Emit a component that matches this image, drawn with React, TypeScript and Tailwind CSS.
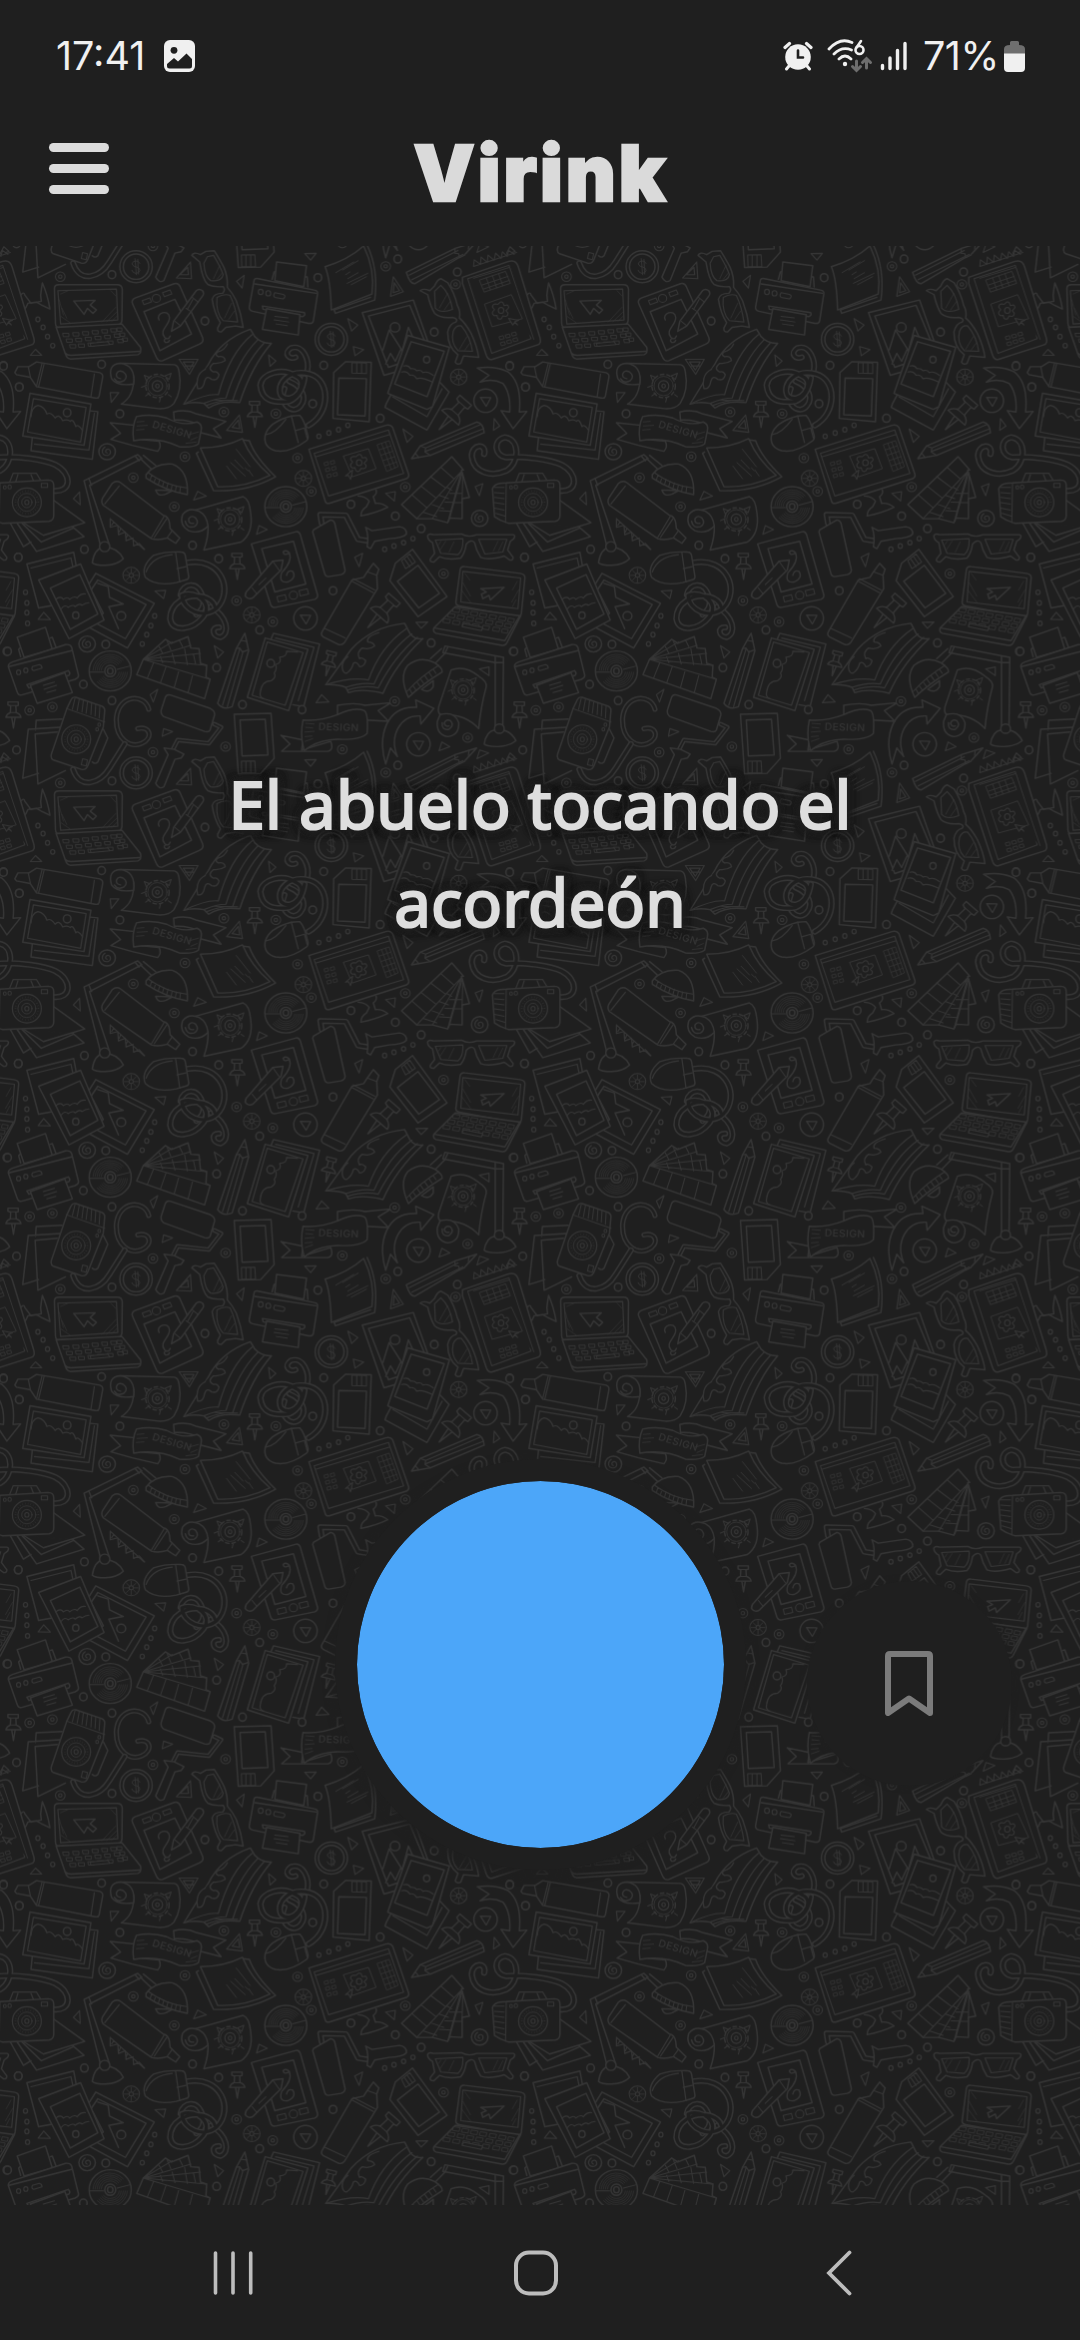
import React from "react";

const BG = "#1f1f1f";
const INK = "#353535";

/* Size of one doodle tile, in drawing units (2.9037 x 3 units per pixel). */
const TILE_W = 1470;
const TILE_H = 1518.75;

function P({ d, w = 4.2 }: { d: string; w?: number }) {
  return <path d={d} strokeWidth={w} />;
}

/* Hollow line: a wide stroke with a narrower background stroke over it. */
function Tube({ d, w = 19 }: { d: string; w?: number }) {
  return (
    <g fill="none">
      <path d={d} strokeWidth={w} />
      <path d={d} strokeWidth={w - 8.5} stroke={BG} />
    </g>
  );
}

function Coin({ x, y }: { x: number; y: number }) {
  return (
    <g>
      <ellipse cx={x} cy={y} rx="47" ry="48" />
      <ellipse cx={x} cy={y} rx="37" ry="38" />
      <path d={`M${x + 11} ${y - 10}q-4-9-13-7q-12 3-8 12q3 5 11 6q10 2 10 10q-1 9-12 9q-9-1-11-9M${x - 3} ${y - 24}l4 48M${x + 5} ${y - 22}l2 44`} strokeWidth="2.6" fill="none" />
    </g>
  );
}

function Play({ x, y }: { x: number; y: number }) {
  return (
    <g>
      <ellipse cx={x} cy={y} rx="34" ry="35" />
      <path d={`M${x - 15} ${y - 10}l30 1l-13 26z`} strokeWidth="3.6" />
    </g>
  );
}

function Disc({ x, y }: { x: number; y: number }) {
  return (
    <g>
      <ellipse cx={x} cy={y} rx="61" ry="60" />
      {[50, 44, 38, 32, 26].map((r) => (
        <path key={r} d={`M${x - r} ${y - 2}A${r} ${r} 0 0 1 ${x + r * 0.75} ${y - r * 0.66}M${x + r} ${y + 4}A${r} ${r} 0 0 1 ${x - r * 0.75} ${y + r * 0.66}`} strokeWidth="1.8" />
      ))}
      <path d={`M${x - 60} ${y + 3}h40M${x + 20} ${y - 5}l38-10`} strokeWidth="3" />
      <ellipse cx={x} cy={y} rx="16" ry="17" />
      <ellipse cx={x} cy={y} rx="8" ry="9" />
    </g>
  );
}

function Lens({ x, y }: { x: number; y: number }) {
  return (
    <g>
      <ellipse cx={x} cy={y} rx="42" ry="43" strokeWidth="3.4" />
      <ellipse cx={x} cy={y} rx="33" ry="34" strokeWidth="5" strokeDasharray="1 7" strokeLinecap="butt" />
      <ellipse cx={x} cy={y} rx="26" ry="27" strokeWidth="2.4" />
      <ellipse cx={x} cy={y} rx="15" ry="16" strokeWidth="2.6" />
      <ellipse cx={x} cy={y} rx="6" ry="7" strokeWidth="3" />
    </g>
  );
}

function Gear({ x, y, s = 1 }: { x: number; y: number; s?: number }) {
  return (
    <g transform={`translate(${x} ${y}) scale(${s})`}>
      <ellipse rx="34" ry="35" strokeWidth="4" strokeDasharray="10 9" />
      <ellipse rx="28" ry="29" strokeWidth="2.4" />
      <ellipse rx="15" ry="16" strokeWidth="3.4" />
      <ellipse rx="5" ry="6" strokeWidth="3.4" />
      <path d="M-38-32l14 6l-8 10zM40-38l-6 18l-13-10zM-46 4l14-6M6 48l3-12M32 26l8 6M-34 30l10-8" strokeWidth="3" />
    </g>
  );
}

function Flower({ x, y }: { x: number; y: number }) {
  return (
    <g strokeWidth="3">
      <path d={`M${x - 5} ${y - 22}q6-6 11 0l3 8l9-2q7 6 2 11l-6 6l6 7q1 9-7 10l-8-1l-4 8q-7 4-11-2l-2-8l-8 1q-8-5-4-12l5-6l-6-7q0-9 8-10l8 1z`} />
      <ellipse cx={x} cy={y} rx="8" ry="9" />
    </g>
  );
}

function Pin({ x, y, r = 0, s = 1 }: { x: number; y: number; r?: number; s?: number }) {
  return (
    <g transform={`translate(${x} ${y}) rotate(${r}) scale(${s})`}>
      <P w={4 / s} d="M-3 10L2 42L7 10" />
      <P w={4 / s} d="M-14-36h30v10l-7 2l1 20q12 4 14 14h-44q2-10 13-14l1-20l-8-3z" />
      <P w={3 / s} d="M-8-25h18M-9-4h20" />
    </g>
  );
}

function Wheel({ x, y }: { x: number; y: number }) {
  return (
    <g>
      <ellipse cx={x} cy={y} rx="24" ry="24" strokeWidth="3" />
      <path d={`M${x - 20} ${y}h40M${x} ${y - 20}v40M${x - 14} ${y - 14}l28 28M${x + 14} ${y - 14}l-28 28`} strokeWidth="2.4" />
      <ellipse cx={x} cy={y} rx="6" ry="6" strokeWidth="3" />
    </g>
  );
}

function Swirl({ x, y }: { x: number; y: number }) {
  return (
    <g>
      <ellipse cx={x} cy={y} rx="24" ry="24" />
      <path d={`M${x} ${y + 4}q-7-3-3-9q7-6 12 2q3 11-7 14q-14 2-16-11q0-9 8-14`} fill="none" strokeWidth="3.5" />
    </g>
  );
}

const RINGS: [number, number][] = [
  [325, 104], [595, 243], [923, 113], [1155, 57], [1328, 96], [1261, 276], [940, 376], [1480, 378], [295, 373], [56, 441],
  [348, 521], [908, 491], [1104, 535], [10, 377], [1019, 793], [1148, 828], [1223, 866], [559, 916], [245, 928], [53, 952],
  [635, 956], [967, 1052], [1523, 952], [754, 1170], [307, 1213], [20, 1234], [242, 1333], [629, 1283], [704, 1394], [325, 1382],
  [877, 1409], [1252, 1209], [48, 1530], [1492, 1234], [1526, 441],
];
const DOTTED: [number, number][] = [
  [175, 110], [1120, 79], [1323, 133], [444, 18], [537, 650], [387, 713], [506, 800], [864, 654], [904, 754], [801, 521], [650, 516],
  [1177, 741], [1288, 1001], [687, 1082], [792, 1145], [152, 1401], [86, 1411], [655, 1520], [994, 1528], [1146, 1384], [1358, 1493],
];
const BEADS: [number, number][] = [
  [110, 238], [125, 262], [138, 290], [153, 317], [926, 589], [955, 579], [983, 569], [1010, 556], [1117, 928], [1144, 918],
  [1172, 908], [1199, 896], [74, 1057], [78, 1089], [78, 1118], [80, 1150], [449, 1128], [438, 1157], [426, 1184], [413, 1212],
];
const TRIANGLES =
  "M885 41l33-1l-16 20zM687 124l22-18l-6 38zM1010 236l29 19l-18 18zM1026 320l30 9l-25 18zM780 345l21 18l-17 16zM88 346l15-18l18 18zM320 458l25 0l-22 29zM1170 567l29 22l-17 18zM1435 536l16 22l-18 13zM562 780l12-26l25 14zM1120 760l28-5l-3 28zM1380 740l22-9l-10 36zM213 776l18-20l2 38zM752 857l24 12l-31 14zM1030 952l23-12l-10 40zM450 1053l31-2l-6 25zM111 1138l16-21l19 22zM1208 1147l34-1l-19 19zM622 1217l27 19l-17 18zM1392 1287l28-6l0 26zM934 1364l21 22l-37 2zM436 1364l22-16l-13 38zM475 1466l26 9l-30 14zM1283 1506l23 14l-31 12zM0 1561l26-8l-15-14z" +
  "M512 114l41-48l3 50zM523 104l22-22l2 22zM1142 110l29 45l-37 14zM1145 128l15 24l-18 6zM520 358l55 0l-25 45zM532 366l31 0l-14 24zM538 378l24 0M695 525l9 52l-46-6zM692 540l4 26l-22-4z";

function Doodles() {
  return (
    <g fill={BG} stroke={INK} strokeLinecap="round" strokeLinejoin="round" strokeWidth="4.2">
      {/* Phone on its stand */}
      <P d="M1530 165q10-12 12 0l18 25l30-6l-2-18q2-20 5-37q15 35 22 78l-26-13l-14-8l-24 4q-12 30-22 18" />
      <P d="M1343 112L1478 64Q1498 58 1505 80L1567 290Q1574 312 1560 315L1430 358Q1418 362 1412 345L1343 130Z" />
      <P d="M1358 116L1478 76L1542 296L1428 340Z" w={3} />
      <P d="M1375 115L1480 82L1550 298" w={2.6} />
      <P d="M1393 120l75-26l14 36l-75 26zM1400 135l75-26M1404 147l75-26M1412 113l12 36M1430 107l12 36M1448 101l12 36" w={2.5} />
      <P d="M1408 192l77-28l32 72l-87 24z" w={2.6} />
      <Flower x={1455} y={211} />
      <P d="M1477 235l29 6l-11 4l8 10l-9-8l-5 8z" w={3} />
      <P d="M1450 290l11-3l3 9l-11 3zM1468 285l11-3l3 9l-11 3zM1486 279l11-3l3 9l-11 3zM1454 308l11-3l3 9l-11 3zM1472 302l11-3l3 9l-11 3zM1490 296l11-3l3 9l-11 3z" w={2.5} />

      {/* Laptop, upper left */}
      <P d="M158 145Q158 134 172 134L340 134Q354 134 355 148L354 240Q354 252 342 256L170 262Q162 262 161 250Z" />
      <P d="M168 152L338 147L342 240L176 252Z" w={3.4} />
      <P d="M176 162l22-10M172 180l12 45M178 230l25 18M310 245l28-28M325 243l14-14M322 152l14 16M180 205l14 30M296 246l40-44" w={1.8} />
      <P d="M214 183L276 181L262 195L280 210L270 220L254 205L244 223Z" />
      <P d="M163 262L354 252L408 322Q412 340 400 344L204 357Q194 356 190 342Z" />
      <P d="M190 340Q195 346 206 346L406 334" />
      {[0, 1, 2].map((r) => (
        <path key={r} d={`M${183 + r * 10} ${280 + r * 17}h17v10h-15zM${212 + r * 8} ${278 + r * 17}h17v10h-15zM${240 + r * 8} ${275 + r * 17}h17v10h-15zM${268 + r * 8} ${272 + r * 17}h17v10h-15zM${296 + r * 8} ${269 + r * 17}h16v10h-14zM${322 + r * 10} ${266 + r * 16}h16v10h-14zM${340 + r * 8} ${264 + r * 15}h14v10h-12z`} strokeWidth="2.6" />
      ))}
      <P d="M262 310l52-5l4 9l-54 5z" w={3} />

      {/* Tablet with stylus, top */}
      <P d="M385 192Q380 180 392 174L506 131Q518 128 523 140L588 292Q593 306 580 312L472 362Q460 366 454 352Z" />
      <P d="M418 215L508 178L556 282L464 332Z" />
      <P d="M413 182l22-8l5 12l-22 8zM472 158l22-8l5 12l-22 8z" w={3} />
      <ellipse cx="454" cy="175" rx="12" ry="12" strokeWidth="3" />
      <P d="M462 240C450 220 490 205 492 232C494 255 460 270 478 292Q488 302 494 288M484 295q-12 4-4 12q10 2 12-6" w={4} />
      <P d="M570 152Q578 144 588 152Q594 160 588 168L524 258L498 274L504 244Z" />
      <P d="M558 172l18 15M508 244l16 13M540 205l12 8M560 178l-16 30" w={3} />

      {/* Glasses standing, top */}
      <P d="M557 46Q562 34 582 44L598 34L622 32Q640 62 650 82Q662 110 660 142Q676 160 686 182Q700 220 706 262L684 258L656 262L642 276Q630 276 632 264L640 248Q622 220 616 178Q620 160 646 160Q656 150 648 140Q620 142 604 134Q588 120 580 66Z" />
      <P d="M602 50L620 46Q640 80 648 104Q644 126 612 122Q594 110 592 70ZM630 172Q650 160 668 166Q684 200 690 246L648 242Q626 220 630 172Z" w={3.4} />
      <P d="M600 110l10 10M638 76l-18 40M644 100l-14 18M672 190l-20 44M680 214l-16 24" w={2} />

      <Coin x={395} y={80} />
      <Coin x={962} y={298} />

      {/* Printer, top */}
      <P d="M790 118l6-22l8-1M880 140l4-30l8 1l2 30" />
      <P d="M803 66L890 77L882 140L798 122Z" />
      <P d="M738 120Q740 114 750 116L912 150Q924 152 922 162L910 242Q908 252 896 250L734 214Q722 210 724 200Z" />
      <P d="M740 132L918 160" />
      <g strokeWidth="3.2">
        <ellipse cx="757" cy="156" rx="7" ry="8" />
        <ellipse cx="779" cy="160" rx="7" ry="8" />
        <path d="M798 158l24 5q8 3 4 10l-4 4l-24-5q-6-4 0-14z" />
      </g>
      <P d="M762 198L884 218Q888 226 878 230L764 208Z" />
      <P d="M774 206L871 224L866 285L762 268Z" />
      <P d="M798 229l38 5M796 240l42 6M802 252l32 5" w={3} />

      {/* Sheets of paper, top */}
      <P d="M1066 15Q1100 90 1088 180L974 220L970 210L1076 172" />
      <P d="M944 80Q1010 60 1056 18Q1090 90 1080 162L962 210Q960 120 944 80Z" />
      <P d="M975 98l52-32M995 90l45-28M1004 104l12-8M1010 116l30-18M1008 130l60-30M1020 134l44-24" w={2.6} />

      {/* Pencil and bunting, top right */}
      <g>
        <P d="M1180 1616L1322 1544L1384 1524L1352 1560L1204 1650Q1190 1650 1180 1616Z" />
        <P d="M1188 1624L1330 1550M1196 1638L1344 1562M1322 1544l-2 14l12 2l2 12l16-8M1362 1532l-2 14" w={3.4} />
        <P d="M1375 1598L1500 1556M1375 1598l2-20l18 14l2-22l18 16l2-22l18 16l4-22l16 16l4-20l14 14l4-18l16 12" w={3} />
        <P d="M1385 1556l8-26l26 9z" w={3} />
      </g>

      {/* Glasses standing, right */}
      <P d="M1220 152Q1228 144 1248 152L1262 138Q1270 118 1280 116L1300 128Q1320 160 1328 196Q1338 214 1334 234Q1352 250 1368 280Q1386 320 1390 352L1346 348L1338 370Q1326 376 1322 366L1330 344Q1300 322 1300 276Q1306 250 1324 246Q1332 236 1314 232Q1280 236 1262 220Q1250 200 1242 164Z" />
      <P d="M1262 154L1280 136Q1306 160 1314 208Q1280 222 1264 204ZM1316 274Q1324 254 1340 258Q1366 290 1372 334L1330 332Q1308 310 1316 274Z" w={3.4} />
      <P d="M1300 160l-24 44M1308 184l-18 26M1356 290l-22 38M1364 310l-14 20" w={2} />

      {/* Framed print and polaroids */}
      <P d="M1052 218L1200 180L1262 362L1115 406Z" />
      <P d="M1070 228L1190 196L1248 340L1128 382Z" />
      <ellipse cx="1147" cy="262" rx="14" ry="14" />
      <P d="M1112 330l18-60l38 62l18-70l30 70M1120 372l14-32l14 24l16-36l20 34" />
      <P d="M1122 490L1140 455L1262 410L1304 456L1240 570L1118 502Z" />
      <P d="M1140 470L1240 530L1284 446" w={3.4} />
      <P d="M1184 286L1305 322L1256 500L1240 508L1126 460Z" />
      <P d="M1194 305L1290 334L1240 470L1146 432Z" />
      <ellipse cx="1239" cy="359" rx="9" ry="10" />
      <P d="M1172 378q14-4 20 8q12-2 18 6q14-4 18 6q12-6 30 8M1166 396q16-4 24 10q12-4 20 10q14-6 46 10" w={3.4} />

      {/* Open books */}
      <P d="M534 492L604 375Q640 300 727 268L740 290Q760 312 788 310Q730 380 696 488Q640 480 606 504L592 490Q560 484 534 492Z" />
      <P d="M534 492Q600 460 634 464Q666 340 732 284M592 490Q630 474 656 474Q690 360 748 300M600 496Q640 480 676 480Q710 370 766 310M624 480l66 2" w={3.6} />
      <P d="M596 388C570 400 570 430 574 446Q590 448 594 424Q600 404 614 418Q632 424 636 404Q630 392 620 396Q600 386 620 370Q640 372 654 362Q652 346 634 350Q622 344 632 336Q652 330 660 312" w={3.8} />
      <P d="M946 1334L1020 1228Q1080 1160 1175 1150L1190 1180Q1204 1200 1228 1196Q1150 1270 1112 1360Q1050 1344 1012 1358L1004 1342Q980 1332 946 1334Z" />
      <P d="M946 1334Q1020 1310 1070 1320Q1104 1220 1180 1166M1004 1342Q1050 1326 1086 1332Q1130 1230 1196 1182M1010 1350Q1060 1334 1098 1344Q1144 1250 1212 1192" w={3.6} />
      <P d="M1010 1250C984 1270 994 1300 1006 1300Q1022 1290 1026 1270Q1036 1262 1044 1280Q1058 1280 1062 1262Q1050 1250 1044 1256Q1034 1236 1052 1224Q1074 1230 1088 1218Q1084 1206 1068 1206Q1062 1190 1100 1178" w={3.8} />

      {/* Markers */}
      <P d="M43 398L52 380L84 380L106 366L290 398Q300 402 298 412L288 468Q286 476 276 474L106 440L88 412L48 404Z" />
      <P d="M122 370L106 438M128 372L112 440M82 380l6 30M274 402L264 470" w={3.4} />
      <P d="M326 730Q338 720 350 728L474 826Q488 828 492 848L494 866L522 894L510 910L486 894Q460 902 440 896L300 796Q292 786 298 774Z" />
      <P d="M346 738L304 792M476 830L440 892M484 836L448 892M500 872l-14 20" w={3.4} />
      <P d="M1084 970L1100 988L1094 1006L1096 1046L1000 1208Q992 1218 980 1212L938 1190Q930 1184 936 1174L1022 1020L1056 1012L1066 996Z" />
      <P d="M1026 1016L1088 1050M1022 1024L1084 1058M1068 996l26 10M944 1166L1002 1194" w={3.4} />

      {/* Unrolled posters */}
      <P d="M350 370L506 374Q518 376 520 396Q530 450 505 490Q490 508 460 506L352 492Q390 470 388 410" />
      <P d="M388 432Q340 440 324 416Q312 374 348 370Q394 374 388 432ZM350 416q-14-2-12-14q6-14 20-6q16 12 2 26q-18 10-28-6" />
      <Gear x={457} y={438} />
      <P d="M560 812L706 770Q724 776 728 820Q736 880 700 906L592 930Q606 890 604 856" />
      <P d="M604 858Q580 884 548 872Q520 856 530 824Q548 800 578 814Q600 826 604 858ZM562 850q-16 2-14-14q8-12 20-2q12 16-4 26q-22 6-26-16" />
      <Gear x={668} y={838} />
      <P d="M1310 1290Q1350 1274 1392 1310Q1414 1324 1412 1340Q1396 1400 1390 1466Q1350 1420 1280 1424Q1270 1420 1274 1400Z" />
      <P d="M1278 1424Q1320 1412 1332 1448Q1334 1486 1300 1490Q1266 1484 1270 1444ZM1304 1458q-10 4-14-8q4-14 18-8q12 14-4 26q-22 4-20-20" />
      <Gear x={1345} y={1350} s={0.95} />

      {/* Mouse with looped cable, top */}
      <Tube d="M858 352C840 360 822 340 845 324C880 312 900 360 892 396" w={17} />
      <Tube d="M826 446C806 490 850 530 874 496C890 476 880 440 840 424" w={17} />
      <Tube d="M896 556C960 520 960 420 900 402C840 386 800 430 816 466C850 500 900 430 862 410C820 380 760 400 756 436C760 480 790 490 840 484C870 470 880 440 884 414" w={18} />
      <P d="M846 528L870 526Q884 540 892 580Q898 596 890 602Q840 640 800 632Q764 622 770 586Q780 546 846 528Z" />
      <P d="M846 528L866 608M858 572l26-8l8 30M772 584Q800 580 830 538" w={3.6} />

      {/* Mouse with looped cable, left */}
      <Tube d="M612 1100C660 1130 670 1180 640 1192C616 1190 612 1160 636 1162" w={17} />
      <Tube d="M524 1064C530 1030 576 1020 588 1070C596 1100 584 1110 570 1124" w={17} />
      <Tube d="M544 968C640 950 680 1050 630 1104C590 1140 530 1110 528 1066C570 1050 620 1090 590 1130C560 1170 500 1180 494 1136C494 1090 540 1060 590 1070Q620 1080 624 1100" w={18} />
      <P d="M446 946Q480 934 526 936Q536 936 538 946L548 1010Q548 1018 538 1020L512 1028Q450 1040 422 1012Q408 980 446 946Z" />
      <P d="M510 938L522 1026M514 986l26-6M424 996Q440 950 500 944" w={3.6} />

      {/* Memory cards */}
      <P d="M1004 365L1078 367L1072 545L967 535L969 398Z" />
      <P d="M984 414L1064 416L1060 528L980 524Z" />
      <P d="M1022 368l42 1l0 32l-42-2zM1036 368v30M1050 369v30" w={3} />
      <P d="M1198 928L1298 1070L1214 1130L1132 1022L1148 970Z" />
      <P d="M1154 1024L1214 976L1276 1060L1216 1104Z" />
      <P d="M1166 962l24-20l16 24l-28 20zM1174 956l16 24M1182 949l16 24" w={3} />
      <P d="M680 1423L787 1420L796 1555L757 1600L692 1601Z" />
      <P d="M697 1440L770 1438L778 1545L703 1548Z" />
      <P d="M701 1564l39-1l2 36l-40 0zM714 1564v35M728 1564v35" w={3} />

      {/* Curved arrows */}
      <P d="M1386 384Q1440 376 1476 396Q1516 430 1508 516L1530 514L1490 566L1455 512L1480 516Q1484 460 1460 430Q1430 414 1394 426L1420 406Z" />
      <P d="M1120 1572C1096 1490 1120 1396 1210 1402L1207 1380L1260 1405L1222 1452L1220 1428C1160 1425 1130 1490 1154 1550L1134 1524Z" />
      <Play x={1410} y={482} />
      <Play x={887} y={1135} />
      <Play x={1215} y={1513} />

      {/* Picture stacks */}
      <P d="M94 590L90 632L268 658L284 515L254 512" />
      <P d="M100 612L258 630L274 520" w={3.6} />
      <P d="M87 460L264 492L244 616L66 588Z" />
      <P d="M97 476L250 502L234 606L80 576Z" w={3.6} />
      <P d="M90 530Q92 500 110 496Q130 500 136 522Q148 514 160 534Q172 520 182 542Q196 536 204 544Q212 534 220 560Q226 550 240 572" w={3.6} />
      <ellipse cx="195" cy="518" rx="11" ry="12" />
      <P d="M786 1200L794 1180L928 1212L882 1400L850 1394" />
      <P d="M800 1194L912 1222L866 1382" w={3.6} />
      <P d="M770 1194L894 1228L838 1412L718 1372Z" />
      <P d="M776 1206L880 1238L828 1396L732 1366Z" w={3.6} />
      <P d="M864 1236L832 1234Q834 1250 812 1252Q820 1268 800 1274Q806 1286 796 1300Q804 1310 788 1322Q760 1322 756 1356Q752 1372 766 1376" w={3.6} />
      <ellipse cx="786" cy="1270" rx="11" ry="12" />

      {/* Ribbon banners */}
      <P d="M320 548L392 556L390 596L462 604Q470 620 458 634L384 616L322 598L350 580Z" />
      <P d="M504 516Q540 506 572 522L656 544L620 566L642 594L584 578L580 556Q550 538 506 540Z" />
      <P d="M396 530Q440 520 484 534Q530 560 572 546Q588 552 584 572L576 612Q560 624 520 620Q460 590 388 602Q382 560 396 530Z" />
      <P d="M398 546l20-2M398 558l30-2M396 570l22-2M572 592l-18 8M576 576l-28 8M570 606l-30 4" w={2.2} />
      <P d="M816 1486L880 1500L876 1530L960 1504Q970 1530 952 1534L818 1534L842 1512Z" />
      <P d="M980 1396Q1030 1386 1060 1396L1136 1388L1098 1412L1128 1444L1062 1440L1056 1416Q1010 1410 980 1424Z" />
      <P d="M880 1440Q930 1444 980 1424Q1030 1400 1058 1412Q1070 1420 1066 1480Q1050 1500 980 1498Q920 1500 884 1532Q870 1490 880 1440Z" />
      <P d="M888 1450l24 2M888 1462l20 2M886 1476l26-2M886 1490l20-2M886 1504l22-8" w={2.2} />
      <g fill="#333333" stroke="none" fontFamily="Inter, sans-serif" fontWeight="500" fontSize="30" letterSpacing="1">
        <text transform="translate(440 562) rotate(17)">DESIGN</text>
        <text transform="translate(924 1470) rotate(2)">DESIGN</text>
      </g>

      {/* Sheet of notes */}
      <P d="M576 636L570 640L620 752Q720 756 800 710Q740 650 724 602L706 600" />
      <P d="M582 624Q650 624 704 596Q730 660 784 706Q710 744 632 740Z" />
      <P d="M686 628l40 52M682 660l24 26M670 668l42 40M658 678l28 38M722 690l12 18M712 684l8 8" w={2.8} />

      {/* Desk lamps */}
      <P d="M244 722L400 644L412 656L260 736L316 910L292 918Z" />
      <P d="M258 716l8 20M392 648l12 14M408 656L442 690M416 646L452 676" />
      <P d="M452 750Q458 772 482 762L500 752Z" />
      <P d="M424 704Q450 668 500 672Q548 690 544 764Q480 752 424 714Z" />
      <P d="M430 698Q480 736 542 744M440 706l-4 14M452 712l-4 14M464 718l-4 15M476 724l-4 15M488 729l-4 16M500 734l-3 16M512 737l-3 18M524 740l-2 18" w={3} />
      <P d="M268 968Q274 926 300 922Q340 920 358 956Q340 974 306 976Q276 976 268 968Z" />
      <ellipse cx="304" cy="920" rx="15" ry="15" />
      <P d="M1292 1218L1462 1252L1460 1456L1438 1458L1438 1268L1286 1238Z" />
      <P d="M1438 1250v18h24M1300 1222l-8 18M1282 1226L1250 1256M1292 1240L1262 1272" />
      <P d="M1224 1348Q1246 1362 1258 1340L1258 1322Z" />
      <P d="M1186 1372Q1158 1310 1184 1276Q1220 1246 1262 1268Q1286 1284 1284 1296Q1230 1330 1186 1372Z" />
      <P d="M1182 1354Q1220 1310 1274 1276M1190 1348l6 12M1200 1338l8 12M1212 1328l8 12M1222 1318l8 12M1234 1308l8 12M1246 1298l8 12M1258 1288l8 12" w={3} />
      <P d="M1406 1512Q1412 1474 1436 1470Q1480 1464 1498 1502Q1480 1518 1444 1520Q1414 1520 1406 1512Z" />
      <ellipse cx="1450" cy="1466" rx="14" ry="14" />
      <P d="M320 836L418 928M320 836l0 26l22-6l2 28l20-8l2 26l20-8l2 24l16-8l16 18M330 846l-6 10M350 866l-4 10M370 886l-4 8" w={3.4} />

      <Disc x={830} y={800} />
      <Disc x={320} y={1293} />

      {/* Desktop monitor */}
      <P d="M1040 768Q1064 770 1072 784L1064 800Q1048 810 1048 828Q1090 820 1126 802Q1110 788 1090 790L1084 770Q1096 760 1092 750" />
      <P d="M897 628L1120 556Q1134 552 1140 562L1187 704Q1188 712 1180 716L956 790Q946 792 944 782Z" />
      <P d="M912 640L1128 570L1172 700L954 768ZM918 650L1130 584" w={3.2} />
      <P d="M1096 614l34-12l26 78l-32 14zM1108 610l28 78M1119 606l28 78M1100 630l34-12M1106 646l34-12M1112 662l34-12M1118 678l34-12" w={2.2} />
      <P d="M998 648l72-22l22 60l-68 24z" w={2.8} />
      <Flower x={1043} y={668} />
      <P d="M1003 708L1024 690L1018 718L1012 706Z" w={3} />
      <P d="M942 668l10-3l2 9l-10 3zM960 664l10-3l2 9l-10 3zM946 686l10-3l2 9l-10 3zM964 682l10-3l2 9l-10 3zM950 704l10-3l2 9l-10 3zM968 700l10-3l2 9l-10 3z" w={2.2} />

      {/* Pencils */}
      <P d="M1195 656L1220 618L1384 546Q1404 550 1406 578L1250 646Z" />
      <P d="M1220 618l16 6l-2 12l16 10M1236 624L1394 554M1236 634L1404 566M1206 640l10 12" w={3.4} />
      <P d="M711 1180L722 1232L674 1400Q648 1412 632 1390L686 1226Z" />
      <P d="M686 1226l10-2l8 12l16-6M696 1228L646 1396M706 1234L660 1400M702 1202l14 2" w={3.4} />

      {/* Long swirl cable */}
      <Tube d="M1406 642C1414 610 1370 610 1370 648C1376 700 1430 712 1470 692C1510 670 1510 596 1466 592C1430 600 1436 648 1470 652C1520 646 1600 660 1630 674C1680 700 1680 760 1622 752" w={18} />

      {/* Camera with prints */}
      <P d="M1500 850L1538 920L1560 906M1520 850L1576 934L1714 890L1680 860M1534 850L1590 906L1684 864M1622 778L1716 848L1596 886L1540 850" />
      <P d="M1498 726L1508 700L1576 700L1590 724M1516 724l6-20M1560 704l8 20" w={3.6} />
      <P d="M1430 746Q1436 732 1452 730L1610 720Q1626 720 1626 736L1626 826Q1626 842 1612 844L1478 850Q1452 842 1436 830Z" />
      <P d="M1470 732L1468 848M1436 742l28 0M1436 758l28 2M1436 772l28 4M1436 788l28 4M1436 804l28 6M1440 820l26 8M1590 730h18v12h-18z" w={3} />
      <g strokeWidth="3">
        <ellipse cx="1484" cy="742" rx="4" ry="5" />
        <ellipse cx="1498" cy="741" rx="5" ry="6" />
      </g>
      <Lens x={1548} y={787} />

      {/* Colour swatch fans */}
      <P d="M1340 690L1363 772L1342 776L1342 836L1306 834L1300 848L1256 836L1210 836L1166 794L1312 650L1346 690Z" />
      <P d="M1340 694L1210 836M1340 694L1256 836M1340 694L1300 848M1342 700L1306 834M1344 700L1342 776M1196 764l44 40M1222 738l44 36M1250 710l44 34M1280 682l38 34M1228 816l40 14M1250 792l38 14M1276 766l26 10M1298 742l14 8M1276 812l34 2M1292 786l50 2M1306 760l36 0" w={3} />
      <P d="M416 1258L480 1198L498 1210L546 1190L554 1224L578 1226L582 1270L600 1276L598 1312L610 1318L594 1376L397 1304Z" />
      <P d="M416 1258L610 1318M416 1258L600 1276M416 1258L582 1240M416 1258L554 1216M416 1258L500 1206M446 1268l-18 46M482 1280l-16 48M520 1290l-14 52M560 1302l-14 56M466 1250l6 18M500 1240l8 32M536 1226l8 48M562 1244l6 28M462 1220l10 20M486 1206l10 24M520 1200l10 20" w={3} />

      {/* Tablet with stylus, lower */}
      <P d="M730 912L860 875Q868 874 872 884L922 1064Q924 1074 914 1078L800 1102Q790 1104 786 1094Z" />
      <P d="M760 926L852 904L888 1032L798 1056Z" />
      <P d="M804 1070l24-6l4 16l-24 6zM868 1052l24-6l4 16l-24 6z" w={3} />
      <ellipse cx="852" cy="1066" rx="12" ry="12" strokeWidth="3" />
      <P d="M838 940q-14 8-16-4q8-8 18 2q10 26-22 60Q808 1030 836 1026Q862 1014 850 994Q836 988 832 1006" w={4} />
      <P d="M792 964L822 960L816 990L736 1072Q722 1082 712 1068Q712 1056 720 1050Z" />
      <P d="M792 964l18 26M732 1044l14 18M752 1034l20-20" w={3} />

      {/* Paint rollers */}
      <Tube d="M934 850L930 824L1004 826L1040 898L1066 902" w={17} />
      <P d="M910 870L960 840Q970 842 972 850L1002 990Q1002 1000 990 1004L954 1010Q944 1010 942 998L908 876Z" />
      <P d="M1062 862L1080 872L1160 860Q1182 864 1180 882Q1170 894 1130 896L1088 904L1076 926L1066 920Q1072 890 1062 862Z" />
      <Tube d="M622 1452L642 1462L606 1510L516 1500L500 1532" w={13} />
      <P d="M494 1365L610 1405Q625 1412 623 1425L610 1470Q606 1478 594 1474L476 1430Q466 1424 468 1410L480 1372Q484 1362 494 1365Z" />
      <P d="M476 1524L506 1528L534 1542L526 1554L508 1558L476 1640Q462 1650 452 1630L488 1544Z" />

      {/* Glasses lying */}
      <P d="M1242 886Q1246 880 1258 884L1340 882Q1360 894 1384 884L1490 884Q1498 886 1492 896L1482 904L1474 930L1490 952Q1490 962 1480 960L1464 948Q1420 962 1396 952Q1382 930 1378 908Q1368 896 1354 912Q1350 940 1338 954Q1300 962 1276 950L1260 966Q1246 966 1250 956L1262 940L1256 908Q1240 898 1242 886Z" />
      <P d="M1264 900L1344 896Q1346 930 1330 944L1280 940ZM1390 898L1472 898L1460 936L1408 942Z" w={3.4} />
      <P d="M1274 914l6-10M1278 930l16-26M1460 906l-12 26M1446 904l-14 30M1318 906l-14 30" w={1.8} />

      {/* Laptop, right */}
      <P d="M1336 990Q1338 978 1350 980L1510 1000Q1526 1002 1524 1016L1514 1120Q1512 1132 1500 1130L1334 1098Q1322 1096 1324 1084Z" />
      <P d="M1344 994L1512 1014L1504 1106L1338 1086Z" w={3.4} />
      <P d="M1340 1050l26 36M1344 1028l22 40M1502 1024l-14 26M1506 1050l-20 36M1350 1000l14 20M1498 1080l-10 20" w={1.8} />
      <P d="M1396 1046L1464 1042L1424 1080L1420 1066L1402 1076L1398 1062L1412 1056Z" />
      <P d="M1322 1100L1512 1128L1476 1200Q1470 1218 1458 1216L1266 1180Q1256 1176 1260 1164Z" />
      <P d="M1262 1164L1466 1202L1508 1130" />
      {[0, 1, 2].map((r) => (
        <path key={r} d={`M${1318 - r * 14} ${1104 + r * 16}l18 3l-3 11l-18-3zM${1344 - r * 13} ${1109 + r * 16}l18 3l-3 11l-18-3zM${1370 - r * 12} ${1114 + r * 16}l18 3l-3 11l-18-3zM${1396 - r * 11} ${1119 + r * 16}l18 3l-3 11l-18-3zM${1424 - r * 10} ${1124 + r * 16}l18 3l-3 11l-18-3zM${1452 - r * 9} ${1129 + r * 16}l18 3l-3 11l-18-3zM${1478 - r * 9} ${1134 + r * 16}l16 3l-3 11l-16-3z`} strokeWidth="2.4" />
      ))}
      <P d="M1346 1150l56 12l-4 10l-56-12z" w={3} />

      {/* Polaroids and print, left */}
      <P d="M78 972L214 937L240 1080L112 1104Z" />
      <P d="M90 984L206 954L230 1070" w={3.6} />
      <P d="M278 1000L448 1090L370 1224L200 1130Z" />
      <P d="M284 1020L424 1094L364 1196L220 1118Z" />
      <ellipse cx="352" cy="1128" rx="13" ry="13" />
      <P d="M284 1030l30 10l4 32l40 20l-42 8l28 66M270 1060l30 60l-30 20" />
      <P d="M112 1020L234 972L302 1140L200 1196Z" />
      <P d="M146 1044L232 1004L284 1122L204 1168Z" />
      <ellipse cx="220" cy="1126" rx="9" ry="10" />
      <P d="M162 1078q14-12 22 0q12-10 18 0q14-12 22-4q10-14 24-12M178 1106q10-14 20-4q14-10 20-2q14-12 20-4q10-8 20-8" w={3.4} />

      {/* Printer, left */}
      <P d="M60 1250l-6-22l6-6M146 1194l6-2l12 34" />
      <P d="M50 1192L132 1162L152 1228L70 1252Z" />
      <P d="M24 1280Q24 1270 36 1266L190 1214Q204 1212 208 1222L228 1306Q228 1314 218 1318L66 1364Q54 1368 50 1356Z" />
      <P d="M26 1280L208 1232" />
      <g strokeWidth="3.2">
        <ellipse cx="54" cy="1297" rx="6" ry="7" />
        <ellipse cx="75" cy="1291" rx="6" ry="7" />
        <path d="M94 1280l20-6q8 2 8 10l-24 8q-8-2-4-12z" />
      </g>
      <P d="M78 1334L198 1292Q206 1300 200 1306L84 1344Z" />
      <P d="M88 1336L188 1298L210 1358L108 1390Z" />
      <P d="M126 1336l32-10M128 1348l36-12M136 1358l26-8" w={3} />

      {/* Tilted camera, prints and hook */}
      <P d="M180 1437L105 1441L103 1470M175 1462L82 1468L66 1615L112 1600M166 1476L102 1482L110 1632L190 1592" />
      <Tube d="M432 1408C420 1360 346 1362 338 1432C334 1500 380 1524 412 1510C446 1494 436 1456 400 1466" w={15} />
      <Tube d="M362 1512L318 1584C290 1632 232 1650 212 1588" w={17} />
      <P d="M300 1468L313 1494L284 1566Q276 1574 268 1566" />
      <P d="M207 1378Q210 1370 220 1372L294 1398Q305 1402 304 1412L300 1460L256 1574Q250 1592 236 1588L155 1560Q145 1555 150 1540L194 1406Z" />
      <P d="M194 1406L304 1446M218 1374l-8 34M230 1378l-6 34M242 1382l-4 34M254 1386l-4 34M266 1390l-2 34M278 1394l-2 34M290 1398l-2 36M240 1556l14 4l-4 18l-14-4z" w={3} />
      <g strokeWidth="3">
        <ellipse cx="288" cy="1454" rx="4" ry="5" />
        <ellipse cx="282" cy="1468" rx="4" ry="5" />
      </g>
      <Lens x={221} y={1498} />

      <Pin x={738} y={520} />
      <Pin x={687} y={976} />
      <Pin x={37} y={1422} />
      <Pin x={954} y={1268} r={14} s={0.95} />
      <Pin x={1315} y={520} r={42} s={1.5} />
      <Pin x={1108} y={1114} r={42} s={1.5} />

      <Wheel x={1332} y={411} />
      <Wheel x={881} y={715} />
      <Wheel x={381} y={1006} />
      <Wheel x={731} y={1125} />
      <Swirl x={311} y={635} />
      <Swirl x={1393} y={835} />
      <Swirl x={253} y={1212} />

      <path d={TRIANGLES} strokeWidth="3.4" />
      {RINGS.map(([x, y]) => (
        <ellipse key={`${x}-${y}`} cx={x} cy={y} rx="11" ry="12" strokeWidth="4.6" />
      ))}
      {DOTTED.map(([x, y]) => (
        <g key={`${x}-${y}`} strokeWidth="3">
          <ellipse cx={x} cy={y} rx="14" ry="14" />
          <ellipse cx={x} cy={y} rx="5" ry="5" strokeWidth="3.4" />
        </g>
      ))}
      {BEADS.map(([x, y]) => (
        <ellipse key={`${x}-${y}`} cx={x} cy={y} rx="6" ry="7" strokeWidth="3.6" />
      ))}
    </g>
  );
}

function Wallpaper() {
  return (
    <svg className="absolute inset-0 h-full w-full" aria-hidden="true">
      <defs>
        <g id="doodles">
          <Doodles />
        </g>
        <pattern id="tile" width={TILE_W} height={TILE_H} patternUnits="userSpaceOnUse" patternTransform="translate(0 -6) scale(0.34439 0.33333)">
          <use href="#doodles" />
          <use href="#doodles" x={-TILE_W} />
          <use href="#doodles" y={-TILE_H} />
          <use href="#doodles" x={-TILE_W} y={-TILE_H} />
        </pattern>
      </defs>
      <rect width="100%" height="100%" fill="url(#tile)" />
    </svg>
  );
}

function StatusBar() {
  return (
    <div className="flex h-[112px] items-center justify-between pl-[56px] pr-[55px] text-[#f0f0f0]">
      <div className="flex items-center">
        <span className="w-[108px] whitespace-nowrap pt-[2px] font-['Inter'] text-[39.5px] leading-none">17:41</span>
        <svg width="31" height="32" viewBox="0 0 31 32">
          <rect width="31" height="32" rx="6" fill="#f0f0f0" />
          <circle cx="10" cy="10.3" r="3.4" fill={BG} />
          <path d="M3 24L10 18L14 21.5L22.5 13.5L28 19V26Q28 28.5 25.5 28.5H5.5Q3 28.5 3 26Z" fill={BG} />
        </svg>
      </div>
      <div className="flex items-center">
        <svg width="30" height="30" viewBox="0 0 30 30" fill="none" stroke="#f0f0f0" strokeLinecap="round">
          <circle cx="15" cy="16" r="12.8" fill="#f0f0f0" stroke="none" />
          <path d="M2 6.5L6.5 2.5M28 6.5L23.5 2.5" strokeWidth="3.2" />
          <path d="M6 25L3.5 28M24 25L26.5 28" strokeWidth="3" />
          <path d="M15 9.5V16.5H20" stroke={BG} strokeWidth="2.6" />
        </svg>
        <svg className="ml-[14px]" width="46" height="34" viewBox="0 0 46 34" fill="none" stroke="#f0f0f0" strokeWidth="2.8" strokeLinecap="round">
          <path d="M2 10Q13 -2 25 3.5M7 15Q15 7 24.5 11M12 20Q18 14 24 20" />
          <circle cx="18" cy="25" r="2.2" fill="#f0f0f0" stroke="none" />
          <path d="M34 2L29.4 8.8" strokeWidth="2.6" />
          <circle cx="32.5" cy="11" r="4" strokeWidth="2.6" />
          <path d="M29.5 22V31M25.5 27.5L29.5 31.5L33.5 27.5M39.5 29V20M35.5 23.5L39.5 19.5L43.5 23.5" stroke="#6e6e6e" strokeWidth="3" />
        </svg>
        <svg className="ml-[7px]" width="28" height="30" viewBox="0 0 28 30" stroke="#f0f0f0" strokeWidth="3.4" strokeLinecap="round">
          <path d="M2.5 24.5V27.5M10 17V27.5M17.5 9.5V27.5M25 2.5V27.5" />
        </svg>
        <span className="ml-[15px] w-[81px] whitespace-nowrap pt-[2px] font-['Inter'] text-[39.5px] leading-none tracking-[-0.5px]">71%</span>
        <svg width="21" height="32" viewBox="0 0 21 32">
          <path d="M6 5V2.5Q6 1 7.5 1H13.5Q15 1 15 2.5V5Q21 5 21 9V14H0V9Q0 5 6 5Z" fill="#6e6e6e" />
          <path d="M0 13.5H21V28Q21 32 17 32H4Q0 32 0 28Z" fill="#f0f0f0" />
        </svg>
      </div>
    </div>
  );
}

function AppBar() {
  return (
    <div className="grid h-[134px] grid-cols-[1fr_auto_1fr] items-start px-[49px]">
      <button className="mt-[31px] flex w-[60px] flex-col gap-3" aria-label="Menú">
        <span className="h-[9px] rounded-full bg-[#dcdcdc]" />
        <span className="h-[9px] rounded-full bg-[#dcdcdc]" />
        <span className="h-[9px] rounded-full bg-[#dcdcdc]" />
      </button>
      <h1 className="mt-[23px] pl-[2px] font-['Inter'] text-[77px] font-black leading-none tracking-[3px] text-[#dadada] [-webkit-text-stroke:2.4px_#dadada]">
        Virink
      </h1>
    </div>
  );
}

function NavigationBar() {
  return (
    <nav className="flex h-[135px] w-full items-center justify-between pl-[213px] pr-[228px] pt-px">
      <svg width="40" height="46" viewBox="0 0 40 46" stroke="#bdbdbd" strokeWidth="3.6" strokeLinecap="round">
        <path d="M2.5 3V43M20 3V43M37.7 3V43" />
      </svg>
      <svg className="mr-2" width="46" height="46" viewBox="0 0 46 46" fill="none" stroke="#bdbdbd" strokeWidth="4">
        <rect x="3" y="2.5" width="40" height="41" rx="13" />
      </svg>
      <svg width="26" height="46" viewBox="0 0 26 46" fill="none" stroke="#bdbdbd" strokeWidth="3.8" strokeLinecap="round">
        <path d="M23.5 2.5L3 23L23.5 43.5" />
      </svg>
    </nav>
  );
}

export default function App() {
  return (
    <div className="flex h-[2340px] w-[1080px] flex-col overflow-hidden bg-[#1f1f1f]">
      <StatusBar />
      <AppBar />
      <main className="relative h-[1959px] overflow-hidden">
        <Wallpaper />
        <div className="relative flex h-full flex-col items-center pt-[509px]">
          <p className="h-[704px] w-[720px] text-center font-['Noto_Sans'] text-[65.5px] leading-[98px] tracking-[0.1px] text-[#dedede] [-webkit-text-stroke:2.2px_#dedede] [text-shadow:0_0_5px_#1f1f1f,0_0_8px_#1f1f1f,0_0_8px_#1f1f1f,0_0_10px_#1f1f1f,0_0_10px_#1f1f1f,0_0_12px_#1f1f1f,0_0_12px_#1f1f1f,0_0_14px_#1f1f1f]">
            El abuelo tocando el acordeón
          </p>
          <div className="grid w-full grid-cols-[1fr_auto_1fr] items-center">
            <span />
            <button className="h-[411px] w-[411px] rounded-full border-[22px] border-[#1f1f1f] bg-[#4ca6f9] bg-clip-padding shadow-[0_4px_12px_#1f1f1f]" aria-label="Siguiente" />
            <button className="ml-[61px] mt-[38px] flex h-[205px] w-[205px] items-center justify-center rounded-full bg-[#1f1f1f] shadow-[0_0_6px_#1f1f1f]" aria-label="Guardar">
              <svg width="48" height="65" viewBox="0 0 48 65" fill="none" stroke="#7b7b7b" strokeWidth="6" strokeLinejoin="round">
                <path d="M3 62V5Q3 3 5 3H43Q45 3 45 5V62L24 47.5Z" />
              </svg>
            </button>
          </div>
        </div>
      </main>
      <NavigationBar />
    </div>
  );
}
